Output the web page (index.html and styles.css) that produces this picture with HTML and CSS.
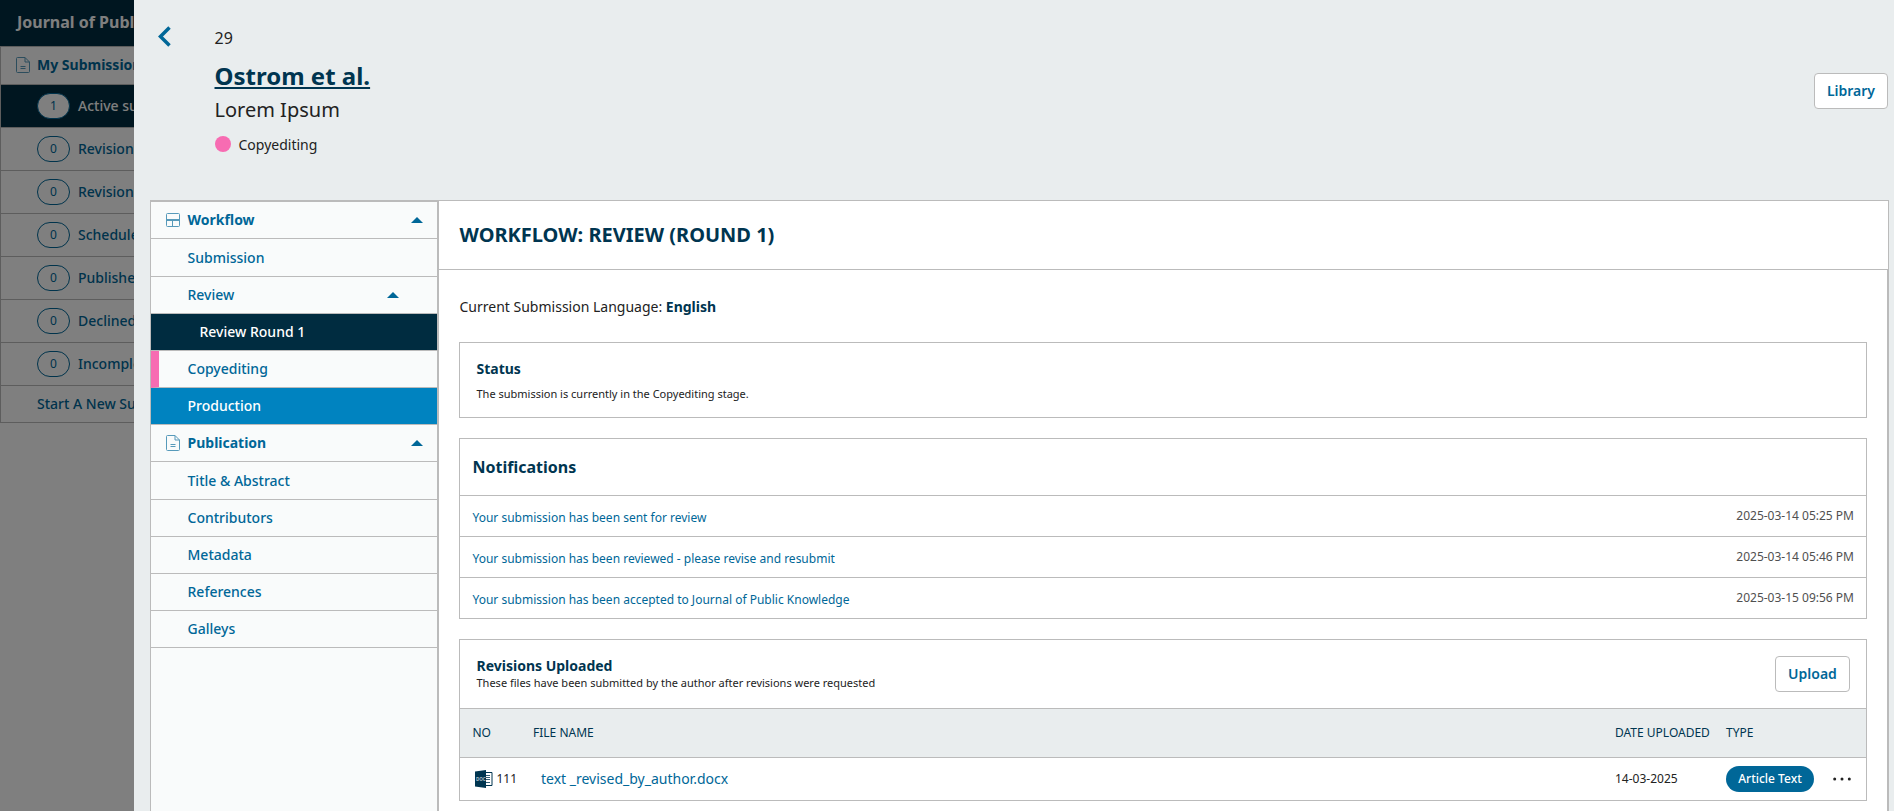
FILE: index.html
```
<!DOCTYPE html>
<html lang="en">
<head>
<meta charset="utf-8">
<title>Journal of Public Knowledge</title>
<link rel="stylesheet" href="styles.css">
</head>
<body>
<div class="page">
  <header class="topbar">Journal of Publ</header>
  <nav class="dash">
    <div class="dash-head">
      <svg class="doc" width="14" height="16" viewBox="0 0 14 16"><path d="M.5 1.500a1 1 0 0 1 1-1H9L13.500 5v9.500a1 1 0 0 1-1 1h-11a1 1 0 0 1-1-1zM9 .5V5h4.500M4.500 9.500h5M4.500 11.500h5"/></svg>
      <b>My Submissions</b>
    </div>
    <div class="dash-row on"><i>1</i>Active su</div>
    <div class="dash-row"><i>0</i>Revisions</div>
    <div class="dash-row"><i>0</i>Revisions</div>
    <div class="dash-row"><i>0</i>Scheduled</div>
    <div class="dash-row"><i>0</i>Published</div>
    <div class="dash-row"><i>0</i>Declined</div>
    <div class="dash-row"><i>0</i>Incomple</div>
    <div class="dash-new">Start A New Su</div>
  </nav>
</div>
<div class="overlay">
  <section class="panel">
    <header class="head">
      <svg class="back" width="13" height="21" viewBox="0 0 13 21"><path d="M11.500 1.500 2.500 10.500l9 9"/></svg>
      <div class="head-text">
        <div class="num">29</div>
        <h1>Ostrom et al.</h1>
        <div class="sub">Lorem Ipsum</div>
        <div class="stage"><span class="dot"></span>Copyediting</div>
      </div>
      <button class="btn library">Library</button>
    </header>
    <div class="body">
      <nav class="side">
        <div class="item group">
          <svg class="flow" width="14" height="14" viewBox="0 0 14 14"><rect x=".5" y=".5" width="13" height="13" rx="1"/><path d="M.5 6.500h13M.5 7.500h13M6.500 7v6.500"/></svg>
          Workflow<span class="caret"></span></div>
        <div class="item first">Submission</div>
        <div class="item review">Review<span class="caret"></span></div>
        <div class="item round">Review Round 1</div>
        <div class="item current">Copyediting</div>
        <div class="item production">Production</div>
        <div class="item group">
          <svg class="doc" width="14" height="16" viewBox="0 0 14 16"><path d="M.5 1.500a1 1 0 0 1 1-1H9L13.500 5v9.500a1 1 0 0 1-1 1h-11a1 1 0 0 1-1-1zM9 .5V5h4.500M4.500 9.500h5M4.500 11.500h5"/></svg>
          Publication<span class="caret"></span></div>
        <div class="item first">Title &amp; Abstract</div>
        <div class="item">Contributors</div>
        <div class="item">Metadata</div>
        <div class="item">References</div>
        <div class="item">Galleys</div>
      </nav>
      <main class="main">
        <h2>WORKFLOW: REVIEW (ROUND 1)</h2>
        <div class="content">
          <p class="lang">Current Submission Language: <b>English</b></p>
          <section class="card status">
            <h3>Status</h3>
            <p>The submission is currently in the Copyediting stage.</p>
          </section>
          <section class="card notes">
            <h4>Notifications</h4>
            <div class="note"><a>Your submission has been sent for review</a><time>2025-03-14 05:25 PM</time></div>
            <div class="note"><a>Your submission has been reviewed - please revise and resubmit</a><time>2025-03-14 05:46 PM</time></div>
            <div class="note"><a>Your submission has been accepted to Journal of Public Knowledge</a><time>2025-03-15 09:56 PM</time></div>
          </section>
          <section class="card files">
            <div class="files-head">
              <div><h3>Revisions Uploaded</h3><p>These files have been submitted by the author after revisions were requested</p></div>
              <button class="btn upload">Upload</button>
            </div>
            <div class="grid thead"><span>NO</span><span>FILE NAME</span><span>DATE UPLOADED</span><span>TYPE</span><span></span></div>
            <div class="grid trow">
              <span class="no"><svg width="18" height="18" viewBox="0 0 18 18"><path class="sheet" d="M10.500 2.500h6.500v13h-6.500"/><path class="lines" d="M11 5.500h4M11 7.500h4M11 9.500h4M11 12.500h4"/><path class="cover" d="M0 1.500 11 0v18L0 16.500z"/><text x="1" y="11.200">DOC</text></svg>111</span>
              <a class="fname">text _revised_by_author.docx</a>
              <span>14-03-2025</span>
              <span><span class="tag">Article Text</span></span>
              <svg class="more" width="18" height="4" viewBox="0 0 18 4"><circle cx="1.700" cy="2" r="1.500"/><circle cx="9" cy="2" r="1.500"/><circle cx="16.300" cy="2" r="1.500"/></svg>
            </div>
          </section>
        </div>
      </main>
    </div>
  </section>
</div>
</body>
</html>
```
FILE: styles.css
```
* { box-sizing: border-box; }
html, body { height: 100%; }
body {
  margin: 0;
  overflow: hidden;
  background: #fff;
  color: #222;
  font: 14px/20px "Noto Sans", sans-serif;
}
h1, h2, h3, h4, p { margin: 0; }
svg { flex: none; }

.topbar {
  height: 46px;
  padding: 0 17px;
  background: #002c40;
  color: #fff;
  font-size: 16px;
  font-weight: 700;
  line-height: 45px;
}
.dash {
  width: 320px;
  border: 1px solid #bbb;
  border-bottom: 0;
  color: #006798;
  font-weight: 500;
  white-space: nowrap;
}
.dash-head {
  display: flex;
  align-items: center;
  gap: 7px;
  height: 38px;
  padding: 0 15px 1px;
  border-bottom: 1px solid #bbb;
}
.dash-row {
  display: flex;
  align-items: center;
  gap: 8px;
  height: 43px;
  padding-left: 36px;
  border-bottom: 1px solid #bbb;
}
.dash-row i {
  width: 33px;
  height: 26px;
  border: 1px solid #006798;
  border-radius: 13px;
  font-size: 12px;
  font-style: normal;
  font-weight: 400;
  line-height: 24px;
  text-align: center;
}
.dash-row.on { background: #002c40; color: #fff; }
.dash-row.on i { background: #fff; color: #006798; }
.dash-new { height: 37px; padding-left: 36px; border-bottom: 1px solid #bbb; line-height: 36px; }

.doc, .flow { fill: none; stroke: #006798; stroke-width: 1; opacity: .65; }

.overlay { position: absolute; inset: 0; padding-left: 134px; background: rgba(0, 0, 0, .5); }
.panel { display: flex; flex-direction: column; height: 100%; background: #e9edee; }
.head { display: flex; flex: none; height: 200px; padding: 26px 6px 0 24px; }
.back { width: 13px; margin-right: 43.500px; fill: none; stroke: #006798; stroke-width: 3.500; }
.head-text { flex: 1; }
.num { font-size: 16px; line-height: 24px; }
h1 {
  margin-top: 10px;
  color: #003550;
  font-size: 24px;
  line-height: 32px;
  text-decoration: underline;
}
.sub { margin-top: 4px; font-size: 20px; line-height: 28px; }
.stage { display: flex; gap: 8px; margin-top: 11px; }
.dot { width: 16px; height: 16px; margin-top: 1px; border-radius: 50%; background: #f76cb2; }
.btn {
  height: 36px;
  padding: 0;
  border: 1px solid #bbb;
  border-radius: 4px;
  background: #fff;
  color: #006798;
  font: 600 14px/34px "Noto Sans", sans-serif;
}
.library { width: 74px; margin-top: 47px; }
.upload { width: 75px; }

.body { display: flex; flex: 1; min-height: 0; padding: 0 5px 0 16px; }
.side {
  flex: none;
  width: 289px;
  border: solid #bbb;
  border-width: 2px 2px 0 1px;
  background: #f9fbfb;
  color: #006798;
  font-weight: 500;
}
.item {
  display: flex;
  align-items: center;
  height: 37px;
  padding-left: 36.500px;
  border-bottom: 1px solid #bbb;
}
.first { height: 38px; }
.group { gap: 7.500px; padding-left: 15px; font-weight: 700; }
.caret {
  width: 12px;
  margin: 0 14px 0 auto;
  border: solid transparent;
  border-width: 0 6px 6px;
  border-bottom-color: #006798;
}
.review .caret { margin-right: 38px; }
.round { padding-left: 48.500px; background: #002c40; color: #fff; }
.current { padding-left: 28.500px; border-left: 8px solid #f76cb2; }
.production { background: #0083c0; color: #fff; }

.main {
  display: flex;
  flex: 1;
  flex-direction: column;
  overflow: hidden;
  border-top: 1px solid #bbb;
  border-right: 1px solid #bbb;
  background: #fff;
}
h2 {
  padding: 0 20.500px;
  border-bottom: 1px solid #bbb;
  color: #003550;
  font-size: 20px;
  line-height: 68px;
}
.content { flex: 1; padding: 27px 20px 0; border-right: 1px solid #bbb; }
.lang { padding-left: .5px; }
b, h3, h4 { font-weight: 700; }
.lang b, h3, h4 { color: #003550; }
.card { border: 1px solid #bbb; margin-top: 20px; }
.card p { font-size: 11px; line-height: 16px; }
h3 { font-size: 14px; line-height: 20px; }
.status { height: 76px; margin-top: 25px; padding: 16px 16.500px; }
.status p { margin-top: 7px; }
h4 { padding: 0 12.500px; font-size: 16px; line-height: 56px; }
.note {
  display: flex;
  justify-content: space-between;
  height: 41px;
  padding: 0 12px 0 12.500px;
  border-top: 1px solid #bbb;
  font-size: 12px;
  line-height: 40px;
}
.note a { padding-top: 2px; color: #006798; }
.note time { color: #505050; }
.files-head { display: flex; justify-content: space-between; height: 68px; padding: 16px 16px 0 16.500px; }
.files-head p { margin-top: -1px; }
.grid {
  display: grid;
  grid-template-columns: 60.500px 1fr 111px 107px 33px;
  align-items: center;
  padding-left: 12.500px;
  border-top: 1px solid #bbb;
  font-size: 12px;
}
.thead { height: 49px; background: #e9edee; color: #003550; }
.trow { height: 43px; }
.no { display: flex; align-items: center; gap: 4px; padding-left: 2px; }
.sheet { fill: #fff; stroke: #003550; }
.lines { fill: none; stroke: #003550; stroke-width: .8; }
.cover { fill: #003550; }
.no text { fill: #aebfc8; font-size: 4.500px; font-weight: 700; }
.fname { padding-left: 8px; color: #006798; font-size: 14px; }
.tag {
  display: block;
  width: 88px;
  height: 26px;
  border-radius: 13px;
  background: #006798;
  color: #fff;
  font-weight: 500;
  line-height: 26px;
  text-align: center;
}
.more { fill: #222; }
```
